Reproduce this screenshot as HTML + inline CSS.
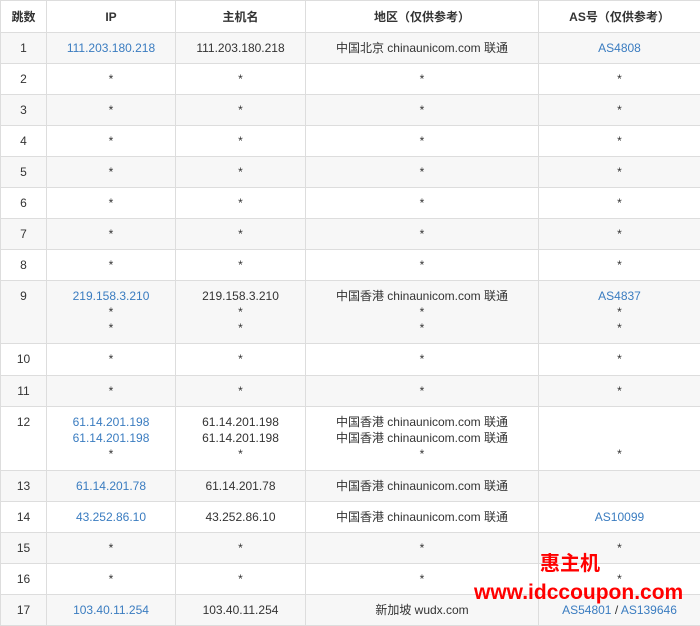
<!DOCTYPE html>
<html><head><meta charset="utf-8"><style>
html,body{margin:0;padding:0;background:#fff;width:700px;height:626px;overflow:hidden;position:relative}
table{border-collapse:collapse;table-layout:fixed;width:700px;font-family:"Liberation Sans","Noto Sans CJK SC",sans-serif;font-size:12px;color:#333}
td,th{border:1px solid #ddd;text-align:center;vertical-align:top;padding:7px 0 0;line-height:16px;box-sizing:border-box}
th{font-weight:bold;height:32px;padding-top:8px}
tr:nth-child(even) td{background:#f7f7f7}
tr td{height:31px}
a{color:#3a7cc0;text-decoration:none}
.wm{position:absolute;color:#f00;font-weight:bold;font-family:"Liberation Sans","Noto Sans CJK SC",sans-serif}
</style></head><body>
<table>
<colgroup><col style="width:46px"><col style="width:129px"><col style="width:130px"><col style="width:233px"><col style="width:162px"></colgroup>
<tr><th>跳数</th><th>IP</th><th>主机名</th><th>地区（仅供参考）</th><th>AS号（仅供参考）</th></tr>
<tr><td>1</td><td><a>111.203.180.218</a></td><td>111.203.180.218</td><td>中国北京 chinaunicom.com 联通</td><td><a>AS4808</a></td></tr>
<tr><td>2</td><td>*</td><td>*</td><td>*</td><td>*</td></tr>
<tr><td>3</td><td>*</td><td>*</td><td>*</td><td>*</td></tr>
<tr><td>4</td><td>*</td><td>*</td><td>*</td><td>*</td></tr>
<tr><td>5</td><td>*</td><td>*</td><td>*</td><td>*</td></tr>
<tr><td>6</td><td>*</td><td>*</td><td>*</td><td>*</td></tr>
<tr><td>7</td><td>*</td><td>*</td><td>*</td><td>*</td></tr>
<tr><td>8</td><td>*</td><td>*</td><td>*</td><td>*</td></tr>
<tr><td style="height:63px">9</td><td><a>219.158.3.210</a><br>*<br>*</td><td>219.158.3.210<br>*<br>*</td><td>中国香港 chinaunicom.com 联通<br>*<br>*</td><td><a>AS4837</a><br>*<br>*</td></tr>
<tr><td style="height:32px">10</td><td>*</td><td>*</td><td>*</td><td>*</td></tr>
<tr><td>11</td><td>*</td><td>*</td><td>*</td><td>*</td></tr>
<tr><td style="height:64px">12</td><td><a>61.14.201.198</a><br><a>61.14.201.198</a><br>*</td><td>61.14.201.198<br>61.14.201.198<br>*</td><td>中国香港 chinaunicom.com 联通<br>中国香港 chinaunicom.com 联通<br>*</td><td>&nbsp;<br>&nbsp;<br>*</td></tr>
<tr><td>13</td><td><a>61.14.201.78</a></td><td>61.14.201.78</td><td>中国香港 chinaunicom.com 联通</td><td></td></tr>
<tr><td>14</td><td><a>43.252.86.10</a></td><td>43.252.86.10</td><td>中国香港 chinaunicom.com 联通</td><td><a>AS10099</a></td></tr>
<tr><td>15</td><td>*</td><td>*</td><td>*</td><td>*</td></tr>
<tr><td>16</td><td>*</td><td>*</td><td>*</td><td>*</td></tr>
<tr><td>17</td><td><a>103.40.11.254</a></td><td>103.40.11.254</td><td>新加坡 wudx.com</td><td><a>AS54801</a> / <a>AS139646</a></td></tr>
</table>
<div class="wm" style="left:540px;top:552px;font-size:20px;line-height:24px">惠主机</div>
<div class="wm" style="left:474px;top:580px;font-size:21px;line-height:26px">www.idccoupon.com</div>
</body></html>
